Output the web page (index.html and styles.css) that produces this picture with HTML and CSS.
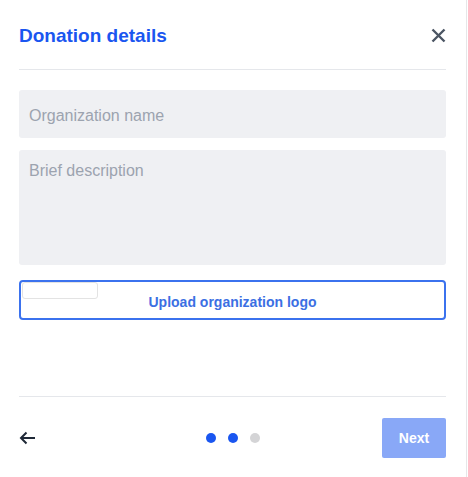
FILE: index.html
```html
<!DOCTYPE html>
<html>
<head>
<meta charset="utf-8">
<link rel="stylesheet" href="styles.css">
</head>
<body>
<div class="modal">
  <div class="header">
    <h1 class="title">Donation details</h1>
    <button class="close" aria-label="Close">
      <svg width="15" height="15" viewBox="0 0 15 15"><path d="M1.5 1.5 L13.5 13.5 M13.5 1.5 L1.5 13.5" stroke="#4b5563" stroke-width="2.4" stroke-linecap="butt"/></svg>
    </button>
  </div>
  <div class="body">
    <div class="input">Organization name</div>
    <div class="textarea">Brief description</div>
    <div class="upload">
      <span class="file-stub"></span>
      <span class="upload-label">Upload organization logo</span>
    </div>
  </div>
  <div class="footer">
    <button class="back" aria-label="Back">
      <svg width="17" height="14" viewBox="0 0 17 14"><path d="M16 7 H2 M7.5 1.5 L2 7 L7.5 12.5" fill="none" stroke="#1f2937" stroke-width="2"/></svg>
    </button>
    <div class="dots">
      <span class="dot on"></span>
      <span class="dot on"></span>
      <span class="dot"></span>
    </div>
    <button class="next">Next</button>
  </div>
</div>
</body>
</html>
```
FILE: styles.css
```css
* { box-sizing: border-box; }
html, body { margin: 0; padding: 0; background: #fff; }
body { font-family: "Liberation Sans", Arial, sans-serif; }
.modal {
  width: 467px;
  height: 477px;
  border-right: 1px solid #e6e6e8;
  padding: 0 20px 0 19px;
  display: flex;
  flex-direction: column;
}
.header {
  height: 70px;
  border-bottom: 1px solid #e5e7eb;
  display: flex;
  align-items: center;
  justify-content: space-between;
  padding-top: 2px;
}
.title {
  margin: 0;
  font-size: 19px;
  font-weight: 700;
  color: #1a56f0;
}
.close {
  border: 0; background: none; padding: 0; margin-right: 0;
  width: 15px; height: 15px; display: flex;
}
.body {
  flex: 1;
  padding-top: 20px;
  display: flex;
  flex-direction: column;
  gap: 12px;
}
.input, .textarea {
  background: #eff0f3;
  border-radius: 3px;
  color: #9ca3af;
  font-size: 16px;
  padding: 0 10px;
}
.input { height: 48px; display: flex; align-items: center; padding-top: 3px; }
.textarea { height: 115px; padding-top: 12px; }
.upload {
  margin-top: 3px;
  height: 40px;
  border: 2px solid #3b72ee;
  border-radius: 4px;
  position: relative;
  display: flex;
  align-items: center;
  justify-content: center;
  padding-top: 3px;
}
.file-stub {
  position: absolute;
  left: 1px; top: 0px;
  width: 76px; height: 17px;
  border: 1px solid #e3e3e3;
  border-radius: 3px;
  background: #fff;
}
.upload-label {
  font-size: 14px;
  font-weight: 700;
  color: #3b6fe3;
}
.footer {
  height: 81px;
  border-top: 1px solid #e5e7eb;
  display: grid;
  grid-template-columns: 1fr auto 1fr;
  align-items: center;
  padding-top: 1px;
}
.back { border: 0; background: none; padding: 0; width: 17px; height: 14px; display: flex; }
.dots { display: flex; gap: 12px; }
.dot { width: 10px; height: 10px; border-radius: 50%; background: #d4d4d6; }
.dot.on { background: #1a56f0; }
.next {
  justify-self: end;
  border: 0;
  width: 64px; height: 40px;
  background: #89a8f7;
  color: #fff;
  font-family: inherit;
  font-size: 14px;
  font-weight: 700;
  border-radius: 2px;
}
```
